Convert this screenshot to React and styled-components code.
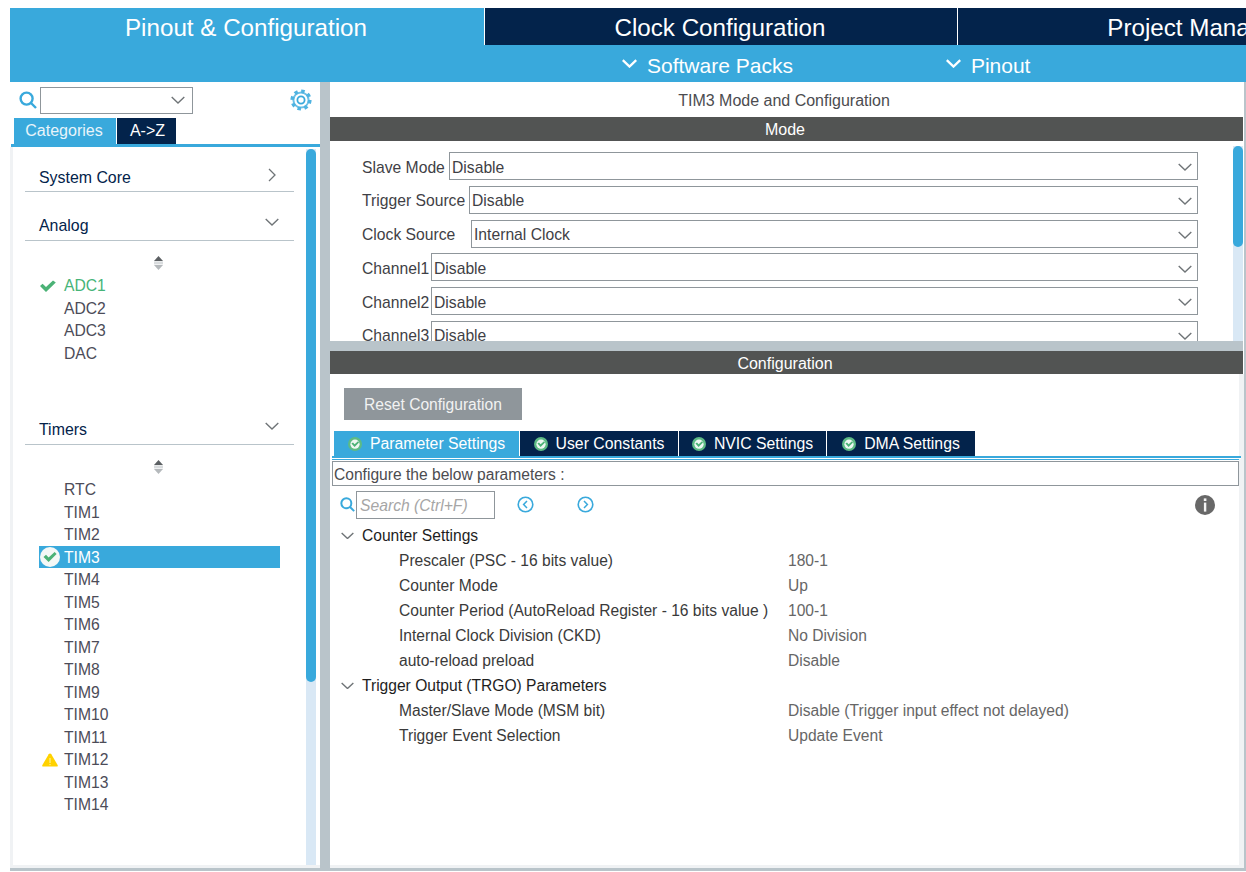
import React from 'react'
import styled, { createGlobalStyle } from 'styled-components'

const BLUE = '#39a9dc'
const NAVY = '#03234b'
const BAR = '#525453'
const SPLIT = '#b9c4ca'
const FRAME = '#f0f2f4'
const LINE = '#8f969b'

const Global = createGlobalStyle`
  html, body { margin: 0; padding: 0; background: #fff; }
  body { font-family: "Liberation Sans", Arial, sans-serif; overflow: hidden; }
`

const Chevron = ({ size = 14, color = '#6f7477', width = 1.4 }) => (
  <svg width={size} height={size * 0.6} viewBox="0 0 20 12" fill="none">
    <path d="M1 1.5 L10 10 L19 1.5" stroke={color} strokeWidth={width * 20 / size} />
  </svg>
)

const ChevronRight = () => (
  <svg width="8" height="14" viewBox="0 0 8 14" fill="none">
    <path d="M1 1 L7 7 L1 13" stroke="#6f7477" strokeWidth="1.3" />
  </svg>
)

const SearchIcon = ({ size = 18 }) => (
  <svg width={size} height={size} viewBox="0 0 18 18" fill="none">
    <circle cx="7.6" cy="7.6" r="6" stroke={BLUE} strokeWidth="2.4" />
    <path d="M12 12 L17 17" stroke={BLUE} strokeWidth="2.4" />
  </svg>
)

const GearIcon = () => (
  <svg width="22" height="22" viewBox="0 0 22 22" fill="none">
    <circle cx="11" cy="11" r="7.6" stroke="#6cc0e6" strokeWidth="2" />
    <circle cx="11" cy="11" r="8.8" stroke="#4fb3e1" strokeWidth="3.6" strokeDasharray="3.4 3.5" />
    <circle cx="11" cy="11" r="3.6" stroke={BLUE} strokeWidth="1.8" />
  </svg>
)

const CheckBadge = ({ size = 14 }) => (
  <svg width={size} height={size} viewBox="0 0 20 20">
    <circle cx="10" cy="10" r="10" fill="#f4f8f6" />
    <path d="M3.5 10 L6 7.8 L8.6 10.6 L14.6 5 L16.6 7 L8.6 15 Z" fill="#4bb276" />
  </svg>
)

const TabBadge = () => (
  <svg width="14" height="14" viewBox="0 0 14 14">
    <circle cx="7" cy="7" r="7" fill="#5dbb85" />
    <circle cx="7" cy="7.2" r="4.6" fill="#eef7f2" />
    <path d="M3.4 6.6 L5 5.4 L6.6 7.2 L10 4.2 L11 5.6 L6.6 10 Z" fill="#4bb276" />
  </svg>
)

const CheckMark = () => (
  <svg width="16" height="12" viewBox="0 0 16 12">
    <path d="M0 6 L2.6 3.8 L6 7 L13 0.4 L15.8 2.6 L6 12 Z" fill="#4bb276" />
  </svg>
)

const Warning = () => (
  <svg width="16" height="14" viewBox="0 0 16 14">
    <path d="M8 0.4 C8.6 0.4 9 0.8 9.3 1.3 L15.6 12 C16.1 12.9 15.7 13.6 14.7 13.6 L1.3 13.6 C0.3 13.6 -0.1 12.9 0.4 12 L6.7 1.3 C7 0.8 7.4 0.4 8 0.4 Z" fill="#ffd200" />
    <path d="M8 5 L8 10" stroke="#fff3b0" strokeWidth="1" />
    <path d="M8 11 L8 12.2" stroke="#fff3b0" strokeWidth="1" />
  </svg>
)

const SortArrows = () => (
  <svg width="11" height="14" viewBox="0 0 11 14">
    <path d="M5.5 0 L10 5 L1 5 Z" fill="#5c6063" />
    <rect x="1" y="5.4" width="9" height="3" fill="#d9dcde" />
    <path d="M1 9 L10 9 L5.5 14 Z" fill="#b5b9bc" />
  </svg>
)

const NavArrow = ({ dir }) => (
  <svg width="17" height="17" viewBox="0 0 17 17" fill="none">
    <circle cx="8.5" cy="8.5" r="7.3" stroke={BLUE} strokeWidth="1.6" />
    <path d={dir === 'left' ? 'M10 5 L6.6 8.5 L10 12' : 'M7 5 L10.4 8.5 L7 12'} stroke={BLUE} strokeWidth="1.5" />
  </svg>
)

const InfoIcon = () => (
  <svg width="20" height="20" viewBox="0 0 20 20">
    <circle cx="10" cy="10" r="10" fill="#686868" />
    <rect x="8.8" y="3.4" width="2.6" height="2.6" fill="#f4f4f4" />
    <rect x="8.9" y="7.6" width="2.4" height="9" fill="#f4f4f4" />
  </svg>
)

const Page = styled.div`
  width: 1246px;
  height: 872px;
  box-sizing: border-box;
  padding: 8px 0 1px 10px;
  display: flex;
  flex-direction: column;
  overflow: hidden;
`

const TopTabs = styled.div`
  display: flex;
  gap: 1px;
  height: 37px;
  flex: none;
`

const TopTab = styled.div`
  width: ${p => p.$w}px;
  flex: none;
  box-sizing: border-box;
  padding-right: 2px;
  background: ${p => (p.$active ? BLUE : NAVY)};
  color: #fff;
  font-size: 24.2px;
  line-height: 39px;
  text-align: center;
`

const SubBar = styled.div`
  height: 37px;
  flex: none;
  box-sizing: border-box;
  padding: 4px 0 0 612px;
  background: ${BLUE};
  display: flex;
  align-items: center;
  gap: 153px;
  color: #fff;
  font-size: 21px;
`

const SubItem = styled.div`
  display: flex;
  align-items: center;
  gap: 10px;
`

const SubChevron = styled.span`
  display: flex;
  margin-bottom: 4px;
`

const Body = styled.div`
  flex: 1;
  min-height: 0;
  display: flex;
  border-bottom: 3px solid ${SPLIT};
  border-right: 2px solid ${SPLIT};
`

const Left = styled.div`
  width: 310px;
  flex: none;
  display: flex;
  flex-direction: column;
`

const SearchRow = styled.div`
  height: 36px;
  flex: none;
  display: flex;
  align-items: center;
  padding: 0 8px 0 9px;
  gap: 3px;
`

const Combo = styled.div`
  width: 153px;
  height: 27px;
  box-sizing: border-box;
  border: 1px solid ${LINE};
  display: flex;
  align-items: center;
  justify-content: flex-end;
  padding-right: 7px;
`

const GearSlot = styled.div`
  margin-left: auto;
  display: flex;
`

const LeftTabs = styled.div`
  display: flex;
  gap: 1px;
  height: 26px;
  flex: none;
  padding-left: 3px;
  border-bottom: 3px solid ${BLUE};
  margin-left: 1px;
`

const LeftTab = styled.div`
  width: ${p => p.$w}px;
  box-sizing: border-box;
  padding: ${p => (p.$active ? '0 2px 0 0' : '0 0 0 2px')};
  background: ${p => (p.$active ? BLUE : NAVY)};
  color: ${p => (p.$active ? '#e8f4fa' : '#fff')};
  font-size: 16px;
  line-height: 25px;
  text-align: center;
`

const TreePanel = styled.div`
  flex: 1;
  min-height: 0;
  display: flex;
  border-left: 3px solid ${FRAME};
  border-bottom: 3px solid ${FRAME};
`

const TreeList = styled.div`
  flex: 1;
  padding: 19px 12px 0 12px;
`

const Scroll = styled.div`
  width: 10px;
  flex: none;
  background: #d9e8f5;
  margin-top: ${p => p.$top}px;
  margin-right: ${p => p.$right}px;
  display: flex;
  flex-direction: column;
`

const Thumb = styled.div`
  height: ${p => p.$h}px;
  background: ${BLUE};
  border-radius: 5px;
`

const CatHead = styled.div`
  height: ${p => (p.$tall ? 27 : 26)}px;
  margin-bottom: ${p => p.$mb}px;
  box-sizing: border-box;
  border-bottom: 1px solid ${SPLIT};
  display: flex;
  align-items: center;
  justify-content: space-between;
  padding: 0 15px ${p => (p.$tall ? 3 : 2)}px 14px;
  color: ${NAVY};
  font-size: 15.9px;
`

const CatIcon = styled.span`
  display: flex;
  width: 14px;
  justify-content: center;
  margin-bottom: ${p => p.$mb}px;
`

const ArrowSlot = styled.div`
  height: 14px;
  padding-left: 128px;
  display: flex;
  margin-bottom: 4px;
`

const ItemList = styled.div`
  margin-bottom: ${p => p.$mb}px;
`

const Item = styled.div`
  height: 22.5px;
  width: 241px;
  margin-left: 14px;
  position: relative;
  padding-left: 25px;
  box-sizing: border-box;
  font-size: 15.7px;
  line-height: 23px;
  background: ${p => (p.$selected ? BLUE : 'transparent')};
  color: ${p => (p.$selected ? '#fff' : p.$ok ? '#46b478' : '#4c4c58')};
`

const ItemIcon = styled.span`
  position: absolute;
  left: ${p => p.$x}px;
  top: ${p => p.$y}px;
  display: flex;
`

const Splitter = styled.div`
  width: 10px;
  flex: none;
  background: ${SPLIT};
`

const Right = styled.div`
  flex: 1;
  min-width: 0;
  display: flex;
  flex-direction: column;
`

const Title = styled.div`
  height: 35px;
  flex: none;
  text-align: center;
  font-size: 16px;
  line-height: 37px;
  color: #4c4c50;
  padding-right: 6px;
`

const Bar = styled.div`
  height: ${p => p.$h}px;
  flex: none;
  background: ${BAR};
  color: #fff;
  font-size: 16px;
  line-height: ${p => p.$lh}px;
  text-align: center;
  margin-right: 1px;
  padding-right: 3px;
`

const ModeArea = styled.div`
  height: 200px;
  flex: none;
  display: flex;
  overflow: hidden;
`

const ModeRows = styled.div`
  flex: 1;
  padding: 11px 0 0 32px;
  display: flex;
  flex-direction: column;
  gap: 5.75px;
`

const ModeRow = styled.div`
  display: flex;
  align-items: center;
  height: 28px;
  flex: none;
  width: 836px;
  color: #3f3f46;
  font-size: 15.7px;
`

const ModeLabel = styled.div`
  width: ${p => p.$w}px;
  flex: none;
  white-space: nowrap;
  padding-top: 3px;
`

const ModeSelect = styled.div`
  flex: 1;
  height: 28px;
  box-sizing: border-box;
  border: 1px solid ${LINE};
  display: flex;
  align-items: center;
  justify-content: space-between;
  padding: 3px 5px 0 2px;
`

const HSplit = styled.div`
  height: 10px;
  flex: none;
  background: ${SPLIT};
  margin-right: 1px;
`

const ConfigArea = styled.div`
  flex: 1;
  min-height: 0;
  padding: 14px 0 0 2px;
  border-right: 5px solid ${FRAME};
  border-bottom: 3px solid ${FRAME};
  display: flex;
  flex-direction: column;
`

const ResetBtn = styled.div`
  width: 178px;
  height: 32px;
  margin-left: 12px;
  background: #8f969b;
  color: #f2f2f2;
  font-size: 15.6px;
  line-height: 33px;
  text-align: center;
  flex: none;
`

const CfgTabs = styled.div`
  display: flex;
  gap: 1px;
  height: 25px;
  margin: 11px 0 0 2px;
  flex: none;
`

const CfgTab = styled.div`
  width: ${p => p.$w}px;
  background: ${p => (p.$active ? BLUE : NAVY)};
  color: #fff;
  font-size: 15.8px;
  display: flex;
  align-items: center;
  justify-content: center;
  gap: 8px;
`

const CfgRule = styled.div`
  height: 3px;
  flex: none;
  box-sizing: border-box;
  border-top: 2px solid ${BLUE};
  border-bottom: 1px solid #fff;
  margin-right: -2px;
`

const CfgThin = styled.div`
  height: 1px;
  flex: none;
  background: ${BLUE};
  margin-bottom: 1px;
`

const HintBox = styled.div`
  height: 25px;
  flex: none;
  box-sizing: border-box;
  border: 1px solid ${LINE};
  font-size: 15.6px;
  line-height: 25px;
  color: #4c4c50;
  padding-left: 1px;
`

const ToolRow = styled.div`
  height: 37px;
  flex: none;
  display: flex;
  align-items: center;
  padding: 0 24px 0 8px;
`

const SearchBox = styled.div`
  width: 139px;
  height: 28px;
  box-sizing: border-box;
  border: 1px solid ${LINE};
  margin-left: 1px;
  padding-left: 3px;
  font-size: 15.7px;
  font-style: italic;
  line-height: 27px;
  color: #a6a6a6;
`

const NavGroup = styled.div`
  display: flex;
  gap: 43px;
  margin-left: 22px;
`

const InfoSlot = styled.div`
  margin-left: auto;
  display: flex;
`

const Group = styled.div`
  height: 25px;
  display: flex;
  align-items: center;
  gap: 8px;
  padding-left: 9px;
  font-size: 15.6px;
  color: #1e1e1e;
`

const Param = styled.div`
  height: 25px;
  display: grid;
  grid-template-columns: 389px 1fr;
  align-items: center;
  padding-left: 67px;
  font-size: 15.6px;
  color: #3a3a3a;
`

const ParamValue = styled.div`
  color: #666;
`

const modes = [
  ['Slave Mode', 87, 'Disable'],
  ['Trigger Source', 107, 'Disable'],
  ['Clock Source', 109, 'Internal Clock'],
  ['Channel1', 69, 'Disable'],
  ['Channel2', 69, 'Disable'],
  ['Channel3', 69, 'Disable'],
]

const counter = [
  ['Prescaler (PSC - 16 bits value)', '180-1'],
  ['Counter Mode', 'Up'],
  ['Counter Period (AutoReload Register - 16 bits value )', '100-1'],
  ['Internal Clock Division (CKD)', 'No Division'],
  ['auto-reload preload', 'Disable'],
]

const trigger = [
  ['Master/Slave Mode (MSM bit)', 'Disable (Trigger input effect not delayed)'],
  ['Trigger Event Selection', 'Update Event'],
]

const timers = ['RTC', 'TIM1', 'TIM2', 'TIM3', 'TIM4', 'TIM5', 'TIM6', 'TIM7', 'TIM8', 'TIM9', 'TIM10', 'TIM11', 'TIM12', 'TIM13', 'TIM14']

const cfgTabs = [
  ['Parameter Settings', 185],
  ['User Constants', 158],
  ['NVIC Settings', 147],
  ['DMA Settings', 148],
]

export default function App() {
  return (
    <Page>
      <Global />
      <TopTabs>
        <TopTab $w={474} $active>Pinout &amp; Configuration</TopTab>
        <TopTab $w={472}>Clock Configuration</TopTab>
        <TopTab $w={478}>Project Manager</TopTab>
      </TopTabs>
      <SubBar>
        <SubItem><SubChevron><Chevron size={15} color="#fff" width={2.4} /></SubChevron>Software Packs</SubItem>
        <SubItem><SubChevron><Chevron size={15} color="#fff" width={2.4} /></SubChevron>Pinout</SubItem>
      </SubBar>
      <Body>
        <Left>
          <SearchRow>
            <SearchIcon />
            <Combo><Chevron size={14} /></Combo>
            <GearSlot><GearIcon /></GearSlot>
          </SearchRow>
          <LeftTabs>
            <LeftTab $w={102} $active>Categories</LeftTab>
            <LeftTab $w={59}>A-&gt;Z</LeftTab>
          </LeftTabs>
          <TreePanel>
            <TreeList>
              <CatHead $mb={22}>System Core<CatIcon $mb={5}><ChevronRight /></CatIcon></CatHead>
              <CatHead $tall $mb={15}>Analog<CatIcon $mb={6}><Chevron size={14} /></CatIcon></CatHead>
              <ArrowSlot><SortArrows /></ArrowSlot>
              <ItemList $mb={54}>
                <Item $ok><ItemIcon $x={1} $y={6}><CheckMark /></ItemIcon>ADC1</Item>
                <Item>ADC2</Item>
                <Item>ADC3</Item>
                <Item>DAC</Item>
              </ItemList>
              <CatHead $tall $mb={15}>Timers<CatIcon $mb={6}><Chevron size={14} /></CatIcon></CatHead>
              <ArrowSlot><SortArrows /></ArrowSlot>
              <ItemList $mb={0}>
                {timers.map(t => (
                  <Item key={t} $selected={t === 'TIM3'}>
                    {t === 'TIM3' && <ItemIcon $x={1} $y={1}><CheckBadge size={20} /></ItemIcon>}
                    {t === 'TIM12' && <ItemIcon $x={3} $y={5}><Warning /></ItemIcon>}
                    {t}
                  </Item>
                ))}
              </ItemList>
            </TreeList>
            <Scroll $top={2} $right={4}><Thumb $h={533} /></Scroll>
          </TreePanel>
        </Left>
        <Splitter />
        <Right>
          <Title>TIM3 Mode and Configuration</Title>
          <Bar $h={24} $lh={25}>Mode</Bar>
          <ModeArea>
            <ModeRows>
              {modes.map(([label, w, value]) => (
                <ModeRow key={label}>
                  <ModeLabel $w={w}>{label}</ModeLabel>
                  <ModeSelect>{value}<Chevron size={14} /></ModeSelect>
                </ModeRow>
              ))}
            </ModeRows>
            <Scroll $top={5} $right={1}><Thumb $h={101} /></Scroll>
          </ModeArea>
          <HSplit />
          <Bar $h={23} $lh={26}>Configuration</Bar>
          <ConfigArea>
            <ResetBtn>Reset Configuration</ResetBtn>
            <CfgTabs>
              {cfgTabs.map(([name, w], i) => (
                <CfgTab key={name} $w={w} $active={i === 0}><TabBadge />{name}</CfgTab>
              ))}
            </CfgTabs>
            <CfgRule />
            <CfgThin />
            <HintBox>Configure the below parameters :</HintBox>
            <ToolRow>
              <SearchIcon size={15} />
              <SearchBox>Search (Ctrl+F)</SearchBox>
              <NavGroup>
                <NavArrow dir="left" />
                <NavArrow dir="right" />
              </NavGroup>
              <InfoSlot><InfoIcon /></InfoSlot>
            </ToolRow>
            <Group><Chevron size={13} />Counter Settings</Group>
            {counter.map(([k, v]) => (
              <Param key={k}>{k}<ParamValue>{v}</ParamValue></Param>
            ))}
            <Group><Chevron size={13} />Trigger Output (TRGO) Parameters</Group>
            {trigger.map(([k, v]) => (
              <Param key={k}>{k}<ParamValue>{v}</ParamValue></Param>
            ))}
          </ConfigArea>
        </Right>
      </Body>
    </Page>
  )
}
